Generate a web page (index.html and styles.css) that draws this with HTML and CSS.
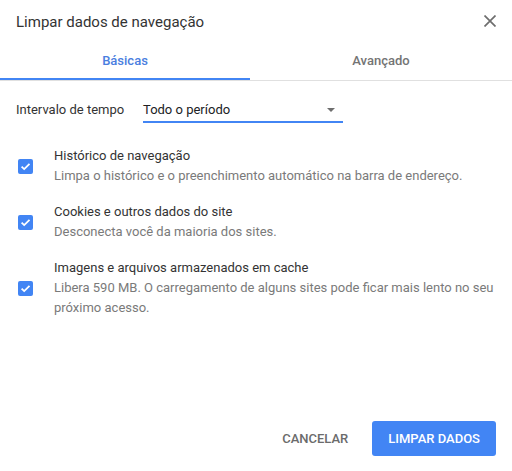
FILE: index.html
```html
<html>
<head>
    <link rel="stylesheet" href="styles.css">
</head>
<body>
    <div id="dialog">
        <div class="dialogHeader">
            <div class="dialogTitle">Limpar dados de navegação</div>
            <a class="closeButton" href="#">
                <svg width="12" height="12" viewBox="0 0 12 12">
                    <path d="M0.5 0.5 L11.5 11.5 M11.5 0.5 L0.5 11.5" stroke="#6e6e6e" stroke-width="1.7" fill="none"/>
                </svg>
            </a>
        </div>

        <div class="tabBar">
            <div class="tab tabActive">Básicas</div>
            <div class="tab">Avançado</div>
        </div>

        <div class="timeRange">
            <span class="timeLabel">Intervalo de tempo</span>
            <div class="select">
                <span>Todo o período</span>
                <span class="selectArrow"></span>
            </div>
        </div>

        <div class="options">
            <div class="option">
                <div class="checkbox">
                    <svg width="15" height="15" viewBox="0 0 15 15">
                        <path d="M3.6 7.6 L6.2 10.1 L11.5 4.8" stroke="#ffffff" stroke-width="1.8" fill="none"/>
                    </svg>
                </div>
                <div class="optionText">
                    <div class="optionTitle">Histórico de navegação</div>
                    <div class="optionDesc">Limpa o histórico e o preenchimento automático na barra de endereço.</div>
                </div>
            </div>
            <div class="option">
                <div class="checkbox">
                    <svg width="15" height="15" viewBox="0 0 15 15">
                        <path d="M3.6 7.6 L6.2 10.1 L11.5 4.8" stroke="#ffffff" stroke-width="1.8" fill="none"/>
                    </svg>
                </div>
                <div class="optionText">
                    <div class="optionTitle">Cookies e outros dados do site</div>
                    <div class="optionDesc">Desconecta você da maioria dos sites.</div>
                </div>
            </div>
            <div class="option">
                <div class="checkbox">
                    <svg width="15" height="15" viewBox="0 0 15 15">
                        <path d="M3.6 7.6 L6.2 10.1 L11.5 4.8" stroke="#ffffff" stroke-width="1.8" fill="none"/>
                    </svg>
                </div>
                <div class="optionText">
                    <div class="optionTitle">Imagens e arquivos armazenados em cache</div>
                    <div class="optionDesc">Libera 590 MB. O carregamento de alguns sites pode ficar mais lento no seu próximo acesso.</div>
                </div>
            </div>
        </div>

        <div class="dialogButtons">
            <a class="button buttonFlat" href="#">Cancelar</a>
            <a class="button buttonPrimary" href="#">Limpar dados</a>
        </div>
    </div>
</body>
</html>
```

FILE: styles.css
```css
body {
    margin: 0;
    background-color: #ffffff;
    font-family: Roboto, "Liberation Sans", sans-serif;
}

#dialog {
    width: 512px;
    height: 471px;
    display: flex;
    flex-direction: column;
    box-sizing: border-box;
}

.dialogHeader {
    display: flex;
    justify-content: space-between;
    align-items: flex-start;
    padding: 12px 16px 0 16px;
    height: 28px;
}

.dialogTitle {
    font-size: 15px;
    line-height: 20px;
    color: #333333;
}

.closeButton {
    display: block;
    width: 12px;
    height: 12px;
    margin-top: 3px;
}

.closeButton svg {
    display: block;
}

.tabBar {
    display: flex;
    border-bottom: 1px solid #e0e0e0;
}

.tab {
    flex: 1;
    padding-top: 3px;
    line-height: 35px;
    box-sizing: border-box;
    height: 40px;
    text-align: center;
    font-size: 13px;
    font-weight: 500;
    color: #747474;
    border-bottom: 2px solid transparent;
}

.tabActive {
    flex: 0 0 250px;
    color: #4a7ee0;
    border-bottom-color: #4285f4;
}

.timeRange {
    display: flex;
    align-items: baseline;
    padding: 19px 16px 0 16px;
}

.timeLabel {
    font-size: 13px;
    color: #333333;
    width: 127px;
}

.select {
    width: 200px;
    display: flex;
    justify-content: space-between;
    align-items: center;
    font-size: 13px;
    line-height: 20px;
    color: #202124;
    padding-bottom: 1px;
    border-bottom: 2px solid #4285f4;
}

.selectArrow {
    width: 0;
    height: 0;
    margin-right: 8px;
    border-left: 4px solid transparent;
    border-right: 4px solid transparent;
    border-top: 4px solid #6e6e6e;
}

.options {
    display: flex;
    flex-direction: column;
    gap: 16px;
    padding: 23px 16px 0 18px;
}

.option {
    display: flex;
    align-items: center;
}

.checkbox {
    width: 15px;
    height: 15px;
    border-radius: 2px;
    background-color: #4285f4;
    margin-right: 21px;
    flex-shrink: 0;
}

.checkbox svg {
    display: block;
}

.optionText {
    font-size: 13px;
    line-height: 20px;
}

.optionTitle {
    color: #333333;
}

.optionDesc {
    color: #7a7a7a;
}

.dialogButtons {
    margin-top: auto;
    display: flex;
    justify-content: flex-end;
    gap: 8px;
    padding: 0 16px 15px 16px;
}

.button {
    display: block;
    height: 35px;
    line-height: 35px;
    padding: 0 16px;
    border-radius: 3px;
    font-size: 13px;
    font-weight: 500;
    text-transform: uppercase;
    text-decoration: none;
}

.buttonFlat {
    color: #6b6b6b;
}

.buttonPrimary {
    background-color: #4285f4;
    color: #ffffff;
}
```
